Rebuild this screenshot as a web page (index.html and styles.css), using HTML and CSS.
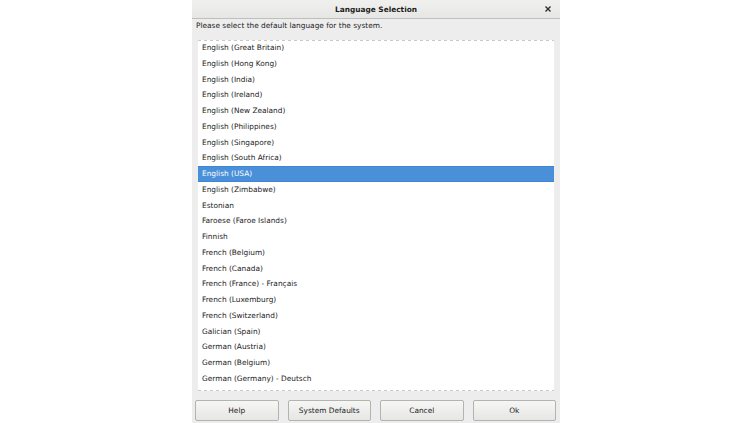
FILE: index.html
```html
<!DOCTYPE html>
<html lang="en">
<head>
    <meta charset="UTF-8">
    <meta name="viewport" content="width=device-width, initial-scale=1.0">
    <title>Language Selection</title>
    <link rel="stylesheet" href="styles.css">
</head>
<body>
    <div class="dialog">

        <!-- Title bar -->
        <div class="titlebar">
            <span class="title">Language Selection</span>
            <span class="close">
                <svg width="6" height="6" viewBox="0 0 6 6">
                    <path d="M1 1 L5 5 M5 1 L1 5" stroke="#2e3436" stroke-width="1.4" stroke-linecap="square"/>
                </svg>
            </span>
        </div>

        <div class="prompt">Please select the default language for the system.</div>

        <!-- Language list -->
        <div class="list">
            <div class="rows">
                <div class="row">English (Great Britain)</div>
                <div class="row">English (Hong Kong)</div>
                <div class="row">English (India)</div>
                <div class="row">English (Ireland)</div>
                <div class="row">English (New Zealand)</div>
                <div class="row">English (Philippines)</div>
                <div class="row">English (Singapore)</div>
                <div class="row">English (South Africa)</div>
                <div class="row selected">English (USA)</div>
                <div class="row">English (Zimbabwe)</div>
                <div class="row">Estonian</div>
                <div class="row">Faroese (Faroe Islands)</div>
                <div class="row">Finnish</div>
                <div class="row">French (Belgium)</div>
                <div class="row">French (Canada)</div>
                <div class="row">French (France) - Français</div>
                <div class="row">French (Luxemburg)</div>
                <div class="row">French (Switzerland)</div>
                <div class="row">Galician (Spain)</div>
                <div class="row">German (Austria)</div>
                <div class="row">German (Belgium)</div>
                <div class="row">German (Germany) - Deutsch</div>
            </div>
            <div class="undershoot top"></div>
            <div class="undershoot bottom"></div>
        </div>

        <!-- Action buttons -->
        <div class="buttons">
            <button class="btn">Help</button>
            <button class="btn">System Defaults</button>
            <button class="btn">Cancel</button>
            <button class="btn">Ok</button>
        </div>
    </div>
</body>
</html>
```

FILE: styles.css
```css
html, body {
    height: 100%;
}

body {
    margin: 0;
    background-color: #fff;
    display: flex;
    justify-content: center;
    font-family: 'DejaVu Sans', sans-serif;
    font-size: 7.4px;
    color: #1c1c1c;
}

.dialog {
    width: 368px;
    height: 423px;
    background-color: #ededed;
    display: flex;
    flex-direction: column;
}

.titlebar {
    height: 18px;
    border-bottom: 1px solid #bfbfbc;
    background: linear-gradient(#f0f0ef, #e6e6e4);
    display: flex;
    align-items: center;
    justify-content: center;
    position: relative;
}

.title {
    font-weight: bold;
}

.close {
    position: absolute;
    right: 9px;
    top: 6px;
    display: flex;
}

.prompt {
    height: 13px;
    line-height: 13px;
    padding-left: 4px;
    margin-bottom: 8px;
}

.list {
    flex: 1;
    margin: 0 6px;
    background-color: #fff;
    overflow: hidden;
    position: relative;
}

.row {
    height: 15.75px;
    line-height: 15.75px;
    padding-left: 4px;
    box-sizing: border-box;
    white-space: nowrap;
}

.row.selected {
    background-color: #4a90d9;
    border-top: 1px solid #3f86d4;
    border-bottom: 1px solid #3f86d4;
    line-height: 13.75px;
    color: #fff;
}

/* dashed edge marks that the list scrolls further */
.undershoot {
    position: absolute;
    left: 0;
    right: 0;
    height: 1px;
    background: repeating-linear-gradient(90deg, #c9c9c9 0 3px, transparent 3px 6px);
}

.undershoot.top {
    top: 0;
}

.undershoot.bottom {
    bottom: 0;
}

.buttons {
    display: grid;
    grid-template-columns: repeat(4, 1fr);
    gap: 9px;
    padding: 0 4px 0 3px;
    margin: 9px 0 2px;
}

.btn {
    height: 21px;
    font-family: inherit;
    font-size: 7.4px;
    color: #1c1c1c;
    background: linear-gradient(#f6f6f5, #e6e6e4);
    border: 1px solid #b3b3b0;
    border-radius: 2px;
    padding: 0;
}
```
